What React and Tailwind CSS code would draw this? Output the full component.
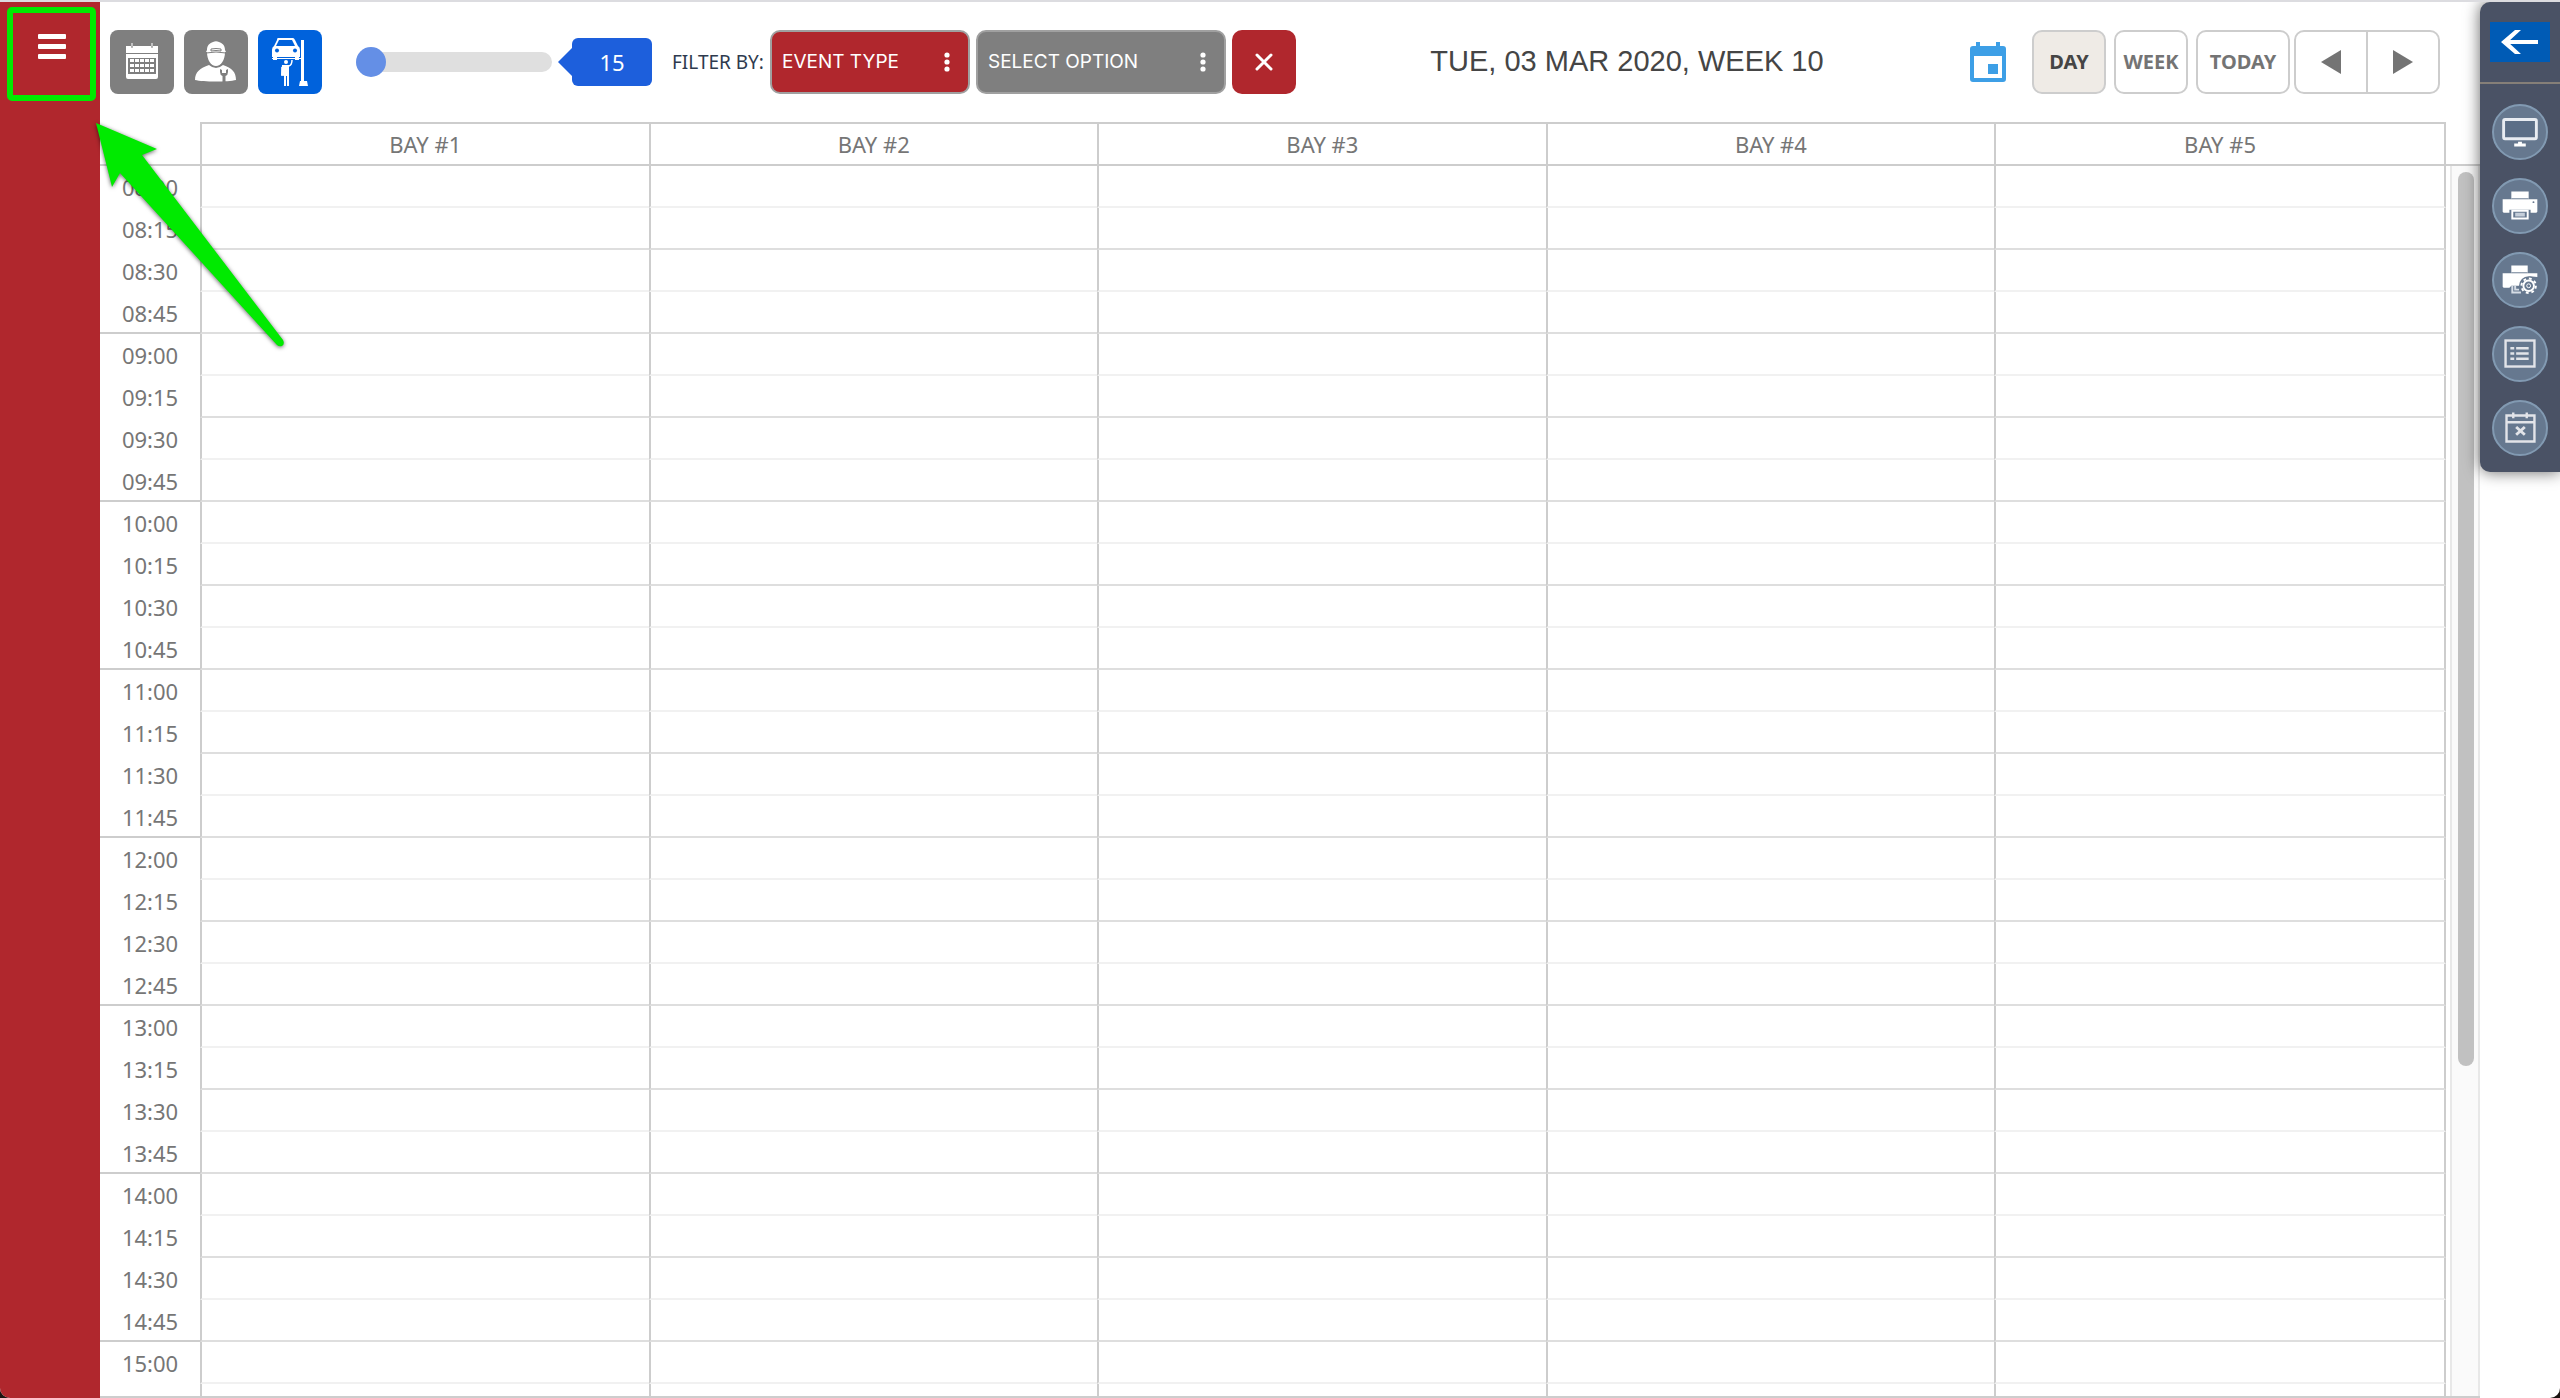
//Bay schedule page
import React, { useState } from "react";

const bays = ["BAY #1", "BAY #2", "BAY #3", "BAY #4", "BAY #5"];

const times = [];
for (let m = 8 * 60; m <= 15 * 60; m += 15) {
  const h = String(Math.floor(m / 60)).padStart(2, "0");
  times.push(`${h}:${String(m % 60).padStart(2, "0")}`);
}

function CalendarGridIcon() {
  return (
    <svg viewBox="0 0 64 64" className="size-16" aria-hidden="true">
      <path fill="#fff" d="M16 16h32v7H16zM16 24h32v23a2 2 0 0 1-2 2H18a2 2 0 0 1-2-2z" />
      <path stroke="#d8d8d8" strokeWidth="1.500" d="M22 13v4M42 13v4" />
      <path stroke="#7f7f7f" strokeWidth="1" d="M22 16v2M42 16v2" />
      <path fill="#7f7f7f" d="M18 28h28v16H18z" />
      <path
        fill="#fff"
        d="M20 29h4v3h-4zM25 29h4v3h-4zM30 29h4v3h-4zM35 29h4v3h-4zM40 29h4v3h-4zM20 34h4v3h-4zM25 34h4v3h-4zM30 34h4v3h-4zM35 34h4v3h-4zM40 34h4v3h-4zM20 39h4v3h-4zM25 39h4v3h-4zM30 39h4v3h-4zM35 39h4v3h-4zM40 39h4v3h-4z"
      />
    </svg>
  );
}

function MechanicIcon() {
  return (
    <svg viewBox="0 0 64 64" className="size-16" aria-hidden="true">
      <path
        fill="#fff"
        d="M23 20c0-5 3-7 6-8 2-1 4-1 6 0 3 1 6 3 6 8l1 2H22zM23 22h18c0 8-4 14-9 14s-9-6-9-14z"
      />
      <path stroke="#7f7f7f" strokeWidth="1" fill="none" d="M27 19q5-1 10 0v2q-5-1-10 0zM22 23q10-2 20 0" />
      <path fill="#fff" d="M11 50c0-8 5-12 14-15q7 6 14 0c9 3 13 7 13 15-8 2-33 2-41 0z" />
      <path
        fill="#7f7f7f"
        d="M36 39v3q0 3 2.500 4v6h3v-6q2.500-1 2.500-4v-3l-2 1v3h-4v-3z"
      />
    </svg>
  );
}

function CarLiftIcon() {
  return (
    <svg viewBox="0 0 64 64" className="size-16" aria-hidden="true">
      <path
        fill="#fff"
        d="M20 8h15q1 0 2 2l3 6q2 1 2 4v7h-1v3h-4v-3H19v3h-4v-3h-1v-7q0-3 2-4l3-6q0-2 1-2z"
      />
      <path fill="#0062dc" d="M21 10h13l3 6H18z" />
      <circle cx="19" cy="20.500" r="2" fill="#0062dc" />
      <circle cx="37" cy="20.500" r="2" fill="#0062dc" />
      <path fill="#fff" d="M43 10h3v41h3l1 5h-9l1-5h1zM14 28h30v1H14z" />
      <circle cx="28" cy="32" r="2" fill="#fff" />
      <path
        fill="none"
        stroke="#fff"
        strokeWidth="1.500"
        d="M31 36q3-1 3-6M24 37v9"
      />
      <path fill="#fff" d="M24 35h7v21h-2V46h-1v10h-2V46l-3-1z" />
    </svg>
  );
}

function EventIcon() {
  return (
    <svg viewBox="0 0 36 40" className="h-10 w-9" aria-hidden="true">
      <path
        fill="#3d9fe6"
        fillRule="evenodd"
        d="M6 0h4v4h16V0h4v4h3a3 3 0 0 1 3 3v30a3 3 0 0 1-3 3H3a3 3 0 0 1-3-3V7a3 3 0 0 1 3-3h3zM4 14v22h28V14z"
      />
      <path fill="#3d9fe6" d="M18 22h10v10H18z" />
    </svg>
  );
}

function DotsIcon() {
  return (
    <svg viewBox="0 0 6 20" className="pointer-events-none absolute right-5 top-[22px] h-5 w-[6px]" aria-hidden="true">
      <circle cx="3" cy="3" r="2.600" fill="#fff" />
      <circle cx="3" cy="10" r="2.600" fill="#fff" />
      <circle cx="3" cy="17" r="2.600" fill="#fff" />
    </svg>
  );
}

const tools = [
  {
    name: "Display",
    icon: (
      <>
        <rect x="12" y="16" width="34" height="20" rx="1.500" fill="#5b6e87" stroke="#e8ecf2" strokeWidth="3" />
        <path fill="#fff" d="M27 39h4v2h4v3H23v-3h4z" />
      </>
    ),
  },
  {
    name: "Print",
    icon: (
      <>
        <path fill="#fff" d="M20 14h18v8h9v13l-1 1h-6v-3H18v3h-6l-1-1V22h9z" />
        <path fill="none" stroke="#66788f" strokeWidth="1" d="M20 21.500h18" />
        <path fill="#66788f" stroke="#fff" strokeWidth="2" d="M21 34h16v8H21z" />
        <path fill="#c5ced9" d="M24 36h10v4H24z" />
        <circle cx="43" cy="25" r="1" fill="#66788f" />
      </>
    ),
  },
  {
    name: "Print settings",
    icon: (
      <>
        <path fill="#fff" d="M20 14h17v8h10v4l-8-1-8 10H20l-2 2h-6l-1-1V22h9z" />
        <path fill="none" stroke="#66788f" strokeWidth="1" d="M20 21.500h17" />
        <path fill="none" stroke="#d5dce5" strokeWidth="2" d="M21 35v7h9M24 35v4h4" />
        <circle cx="38" cy="35" r="10" fill="#66788f" />
        <circle cx="38" cy="35" r="7.500" fill="none" stroke="#fff" strokeWidth="2" strokeDasharray="2.945 2.945" />
        <circle cx="38" cy="35" r="5.500" fill="none" stroke="#fff" strokeWidth="2" />
        <circle cx="38" cy="35" r="2" fill="none" stroke="#fff" strokeWidth="1" />
      </>
    ),
  },
  {
    name: "List",
    icon: (
      <>
        <rect x="14" y="15" width="30" height="27" fill="none" stroke="#e2e4e9" strokeWidth="2.500" />
        <path stroke="#e2e4e9" strokeWidth="2.500" d="M19 23h4M19 28.500h4M19 34h4M25 23h13M25 28.500h13M25 34h13" />
      </>
    ),
  },
  {
    name: "Cancelled",
    icon: (
      <>
        <path fill="none" stroke="#e2e4e9" strokeWidth="2.500" d="M15 16h29v27H15zM15 23h29M22 13v6M36 13v6" />
        <path stroke="#e2e4e9" strokeWidth="3" d="M25 28l9 8M34 28l-9 8" />
      </>
    ),
  },
];

function Sidebar() {
  return (
    <aside className="w-[100px] shrink-0 bg-[#b0272d] pl-[7px] pr-1 pt-[5px]">
      <button
        aria-label="Menu"
        className="flex h-[94px] w-full flex-col items-center gap-[5px] rounded-[5px] border-6 border-[#00ea00] pt-[21px]"
      >
        <span className="h-[5px] w-7 rounded-[1px] bg-white" />
        <span className="h-[5px] w-7 rounded-[1px] bg-white" />
        <span className="h-[5px] w-7 rounded-[1px] bg-white" />
      </button>
    </aside>
  );
}

function Toolbar() {
  const [step, setStep] = useState(15);

  return (
    <header className="flex h-[120px] shrink-0 items-start pl-[10px] pr-10 pt-7">
      <div className="flex gap-[10px]">
        <button aria-label="Calendar view" className="size-16 rounded-lg bg-[#7f7f7f]">
          <CalendarGridIcon />
        </button>
        <button aria-label="Technician view" className="size-16 rounded-lg bg-[#7f7f7f]">
          <MechanicIcon />
        </button>
        <button aria-label="Bay view" className="size-16 rounded-lg bg-[#0062dc]">
          <CarLiftIcon />
        </button>
      </div>
      <div className="ml-[34px] flex h-16 items-center">
        <input
          type="range"
          aria-label="Slot length"
          min="15"
          max="60"
          step="15"
          value={step}
          onChange={(e) => setStep(Number(e.target.value))}
          className="h-5 w-[196px] appearance-none rounded-full bg-[#dfdfdf] [&::-webkit-slider-thumb]:size-[30px] [&::-webkit-slider-thumb]:appearance-none [&::-webkit-slider-thumb]:rounded-full [&::-webkit-slider-thumb]:bg-[#648fe6]"
        />
        <svg viewBox="0 0 14 28" className="ml-[6px] h-7 w-[14px]" aria-hidden="true">
          <path fill="#1d5fdc" d="M14 0v28L0 14z" />
        </svg>
        <output className="flex h-12 w-20 items-center justify-center rounded-[6px] bg-[#1d5fdc] text-[22px] text-white">
          {step}
        </output>
      </div>
      <div className="flex h-16 items-center gap-[6px]">
        <label htmlFor="event-type" className="ml-5 w-[92px] whitespace-nowrap text-[19px] text-[#2e3a4e]">
          FILTER BY:
        </label>
        <div className="relative font-[Inter,sans-serif] text-[19px] text-white">
          <select
            id="event-type"
            className="h-16 w-[200px] appearance-none rounded-[10px] border-2 border-[#a0a0a0] bg-[#b0272d] px-[10px]"
          >
            <option>EVENT TYPE</option>
          </select>
          <DotsIcon />
        </div>
        <div className="relative font-[Inter,sans-serif] text-[19px] text-white">
          <select
            aria-label="Option"
            className="h-16 w-[250px] appearance-none rounded-[10px] border-2 border-[#a0a0a0] bg-[#7f7f7f] px-[10px]"
          >
            <option>SELECT OPTION</option>
          </select>
          <DotsIcon />
        </div>
        <button aria-label="Clear filter" className="flex size-16 items-center justify-center rounded-[10px] bg-[#b0272d]">
          <svg viewBox="0 0 18 18" className="size-[18px]" aria-hidden="true">
            <path stroke="#fff" strokeWidth="3" strokeLinecap="round" d="M2 2l14 14M16 2L2 16" />
          </svg>
        </button>
      </div>
      <h1 className="flex h-16 flex-1 items-center justify-center whitespace-nowrap pr-3 font-['Liberation_Sans',Arial,sans-serif] text-[29px] text-[#454545]">
        TUE, 03 MAR 2020, WEEK 10
      </h1>
      <div className="flex h-16 items-center gap-2 text-[20px] font-bold text-[#747474]">
        <button aria-label="Pick a date" className="mr-[18px]">
          <EventIcon />
        </button>
        <button className="h-16 w-[74px] rounded-[10px] border-2 border-[#cdcdcd] bg-[#efebe6] text-[#454545]">DAY</button>
        <button className="h-16 w-[74px] rounded-[10px] border-2 border-[#cdcdcd]">WEEK</button>
        <button className="h-16 w-[94px] rounded-[10px] border-2 border-[#cdcdcd]">TODAY</button>
        <div className="-ml-1 flex h-16 w-[146px] rounded-[10px] border-2 border-[#cdcdcd]">
          <button aria-label="Previous" className="flex flex-1 items-center justify-center border-r-2 border-[#cdcdcd]">
            <svg viewBox="0 0 20 24" className="h-6 w-5" aria-hidden="true">
              <path fill="#747474" d="M20 0v24L0 12z" />
            </svg>
          </button>
          <button aria-label="Next" className="flex flex-1 items-center justify-center">
            <svg viewBox="0 0 20 24" className="h-6 w-5" aria-hidden="true">
              <path fill="#747474" d="M0 0v24l20-12z" />
            </svg>
          </button>
        </div>
      </div>
    </header>
  );
}

function slotBorder(i) {
  return i % 2 === 0 ? "border-b-[#f1f1f1]" : "border-b-[#dedede]";
}

function Schedule() {
  return (
    <div className="flex min-h-0 flex-1 overflow-hidden border-b-2 border-[#cdcdcd]">
      <div className="flex-1">
        <table className="w-full table-fixed border-separate border-spacing-0 text-[22px] leading-6 text-[#767676]">
          <thead>
            <tr>
              <td className="h-11 w-[100px] border-b-2 border-[#cdcdcd]" />
              {bays.map((bay) => (
                <th
                  key={bay}
                  scope="col"
                  className="h-11 w-[19.12%] border-y-2 border-l-2 border-[#cdcdcd] p-0 font-normal last:w-auto last:border-r-2"
                >
                  {bay}
                </th>
              ))}
            </tr>
          </thead>
          <tbody>
            {times.map((time, i) => (
              <tr key={time}>
                <th
                  scope="row"
                  className={`h-[42px] border-b-2 p-0 pt-[2px] font-normal ${i % 4 === 3 ? "border-b-[#cdcdcd]" : "border-b-transparent"}`}
                >
                  {time}
                </th>
                {bays.map((bay) => (
                  <td
                    key={bay}
                    className={`border-b-2 border-l-2 border-l-[#cdcdcd] p-0 last:border-r-2 last:border-r-[#cdcdcd] ${slotBorder(i)}`}
                  />
                ))}
              </tr>
            ))}
            <tr>
              <td className="h-[42px]" />
              {bays.map((bay) => (
                <td key={bay} className="border-l-2 border-[#cdcdcd] p-0 last:border-r-2" />
              ))}
            </tr>
          </tbody>
        </table>
      </div>
      <div className="flex w-[34px] flex-col">
        <div className="h-11 shrink-0 border-b-2 border-[#cdcdcd]" />
        <div className="ml-1 flex-1 border-x-2 border-[#e8e8e8] bg-[#fafafa] px-[6px] pt-[6px]">
          <div className="h-[73%] w-4 rounded-full bg-[#c1c1c1]" />
        </div>
      </div>
    </div>
  );
}

function ToolPanel() {
  return (
    <div className="w-20 shrink-0">
      <nav className="flex flex-col items-center rounded-l-[10px] bg-[#4a5265] pb-4 pt-5 shadow-[0_0_16px_rgba(0,0,0,0.6)]">
        <button aria-label="Back" className="flex h-10 w-[60px] items-center justify-center bg-[#005bb5]">
          <svg viewBox="0 0 38 24" className="h-6 w-[38px]" aria-hidden="true">
            <path fill="none" stroke="#fff" strokeWidth="4" d="M37 12H3" />
            <path fill="#fff" d="M14 0h6L7 12l13 12h-6L0 12z" />
          </svg>
        </button>
        <hr className="mt-5 w-full border-t-2 border-[#857f78]" />
        <div className="mt-5 flex flex-col gap-[18px]">
          {tools.map((tool) => (
            <button key={tool.name} aria-label={tool.name} className="size-14 rounded-full border-2 border-[#829ab2] bg-[#66788f]">
              <svg viewBox="2 2 54 54" className="size-[52px]" aria-hidden="true">
                {tool.icon}
              </svg>
            </button>
          ))}
        </div>
      </nav>
    </div>
  );
}

export default function App() {
  return (
    <div className="bg-[#1a1310]">
      <div className="relative flex h-screen overflow-hidden rounded-b-[10px] border-t-2 border-[#dcdce0] bg-white font-['Noto_Sans',Tahoma,sans-serif]">
        <Sidebar />
        <main className="flex min-w-0 flex-1 flex-col">
          <Toolbar />
          <Schedule />
        </main>
        <ToolPanel />
        <svg
          viewBox="0 0 200 236"
          className="pointer-events-none absolute left-[92px] top-[118px] h-[236px] w-[200px] drop-shadow-[0_1px_2px_rgba(0,0,0,0.6)]"
          aria-hidden="true"
        >
          <path fill="#00ea00" d="M4 3l61 26-15 6 141 185q2 4-1 6-3 1-5-1L28 53l-8 14z" />
        </svg>
      </div>
    </div>
  );
}
